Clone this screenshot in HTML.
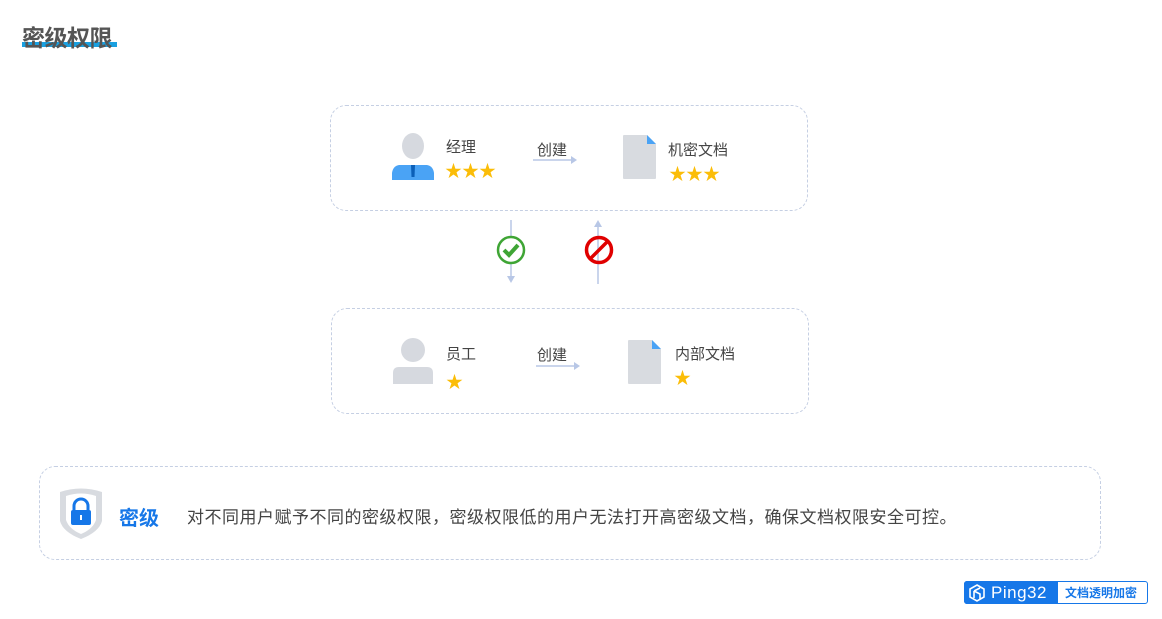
<!DOCTYPE html>
<html><head><meta charset="utf-8"><style>
body{margin:0;width:1162px;height:619px;background:#fff;position:relative;overflow:hidden;font-family:"Liberation Sans","Noto Sans CJK SC",sans-serif;color:#444}
.a{position:absolute}
.box{position:absolute;border:1px dashed #c5cfe3;border-radius:16px}
.t{font-size:15px;color:#444;white-space:nowrap}
.star{color:#fbbd08;font-size:17px;letter-spacing:0px;white-space:nowrap}
</style></head><body>
<div class="a" style="left:22px;top:42px;width:95px;height:5px;background:#1aa0e0"></div>
<div class="a" style="left:22px;top:19px;font-size:23px;font-weight:bold;color:#555;letter-spacing:-0.5px">密级权限</div>

<div class="box" style="left:330px;top:105px;width:476px;height:104px"></div>
<div class="box" style="left:331px;top:308px;width:476px;height:104px"></div>
<div class="box" style="left:39px;top:466px;width:1060px;height:92px"></div>

<svg class="a" style="left:391px;top:133px" width="44" height="48"><ellipse cx="22" cy="13" rx="11" ry="13" fill="#d6d9df"/><path d="M8 32 L36 32 Q42 33 43 40 L43 47 L1 47 L1 40 Q2 33 8 32Z" fill="#4aa3f5"/><path d="M20 32 L24 32 L23.5 44 L20.5 44Z" fill="#0b5fb8"/></svg>
<div class="a t" style="left:446px;top:136px">经理</div>
<div class="a star" style="left:445px;top:157px">★★★</div>
<div class="a t" style="left:537px;top:139px">创建</div>
<svg class="a" style="left:533px;top:155px" width="46" height="10"><line x1="0" y1="5" x2="40" y2="5" stroke="#b8c7e6" stroke-width="1.5"/><path d="M38 1 L44 5 L38 9Z" fill="#b8c7e6"/></svg>
<svg class="a" style="left:622px;top:135px" width="35" height="45"><path d="M2 0 H25 L34 9 V43 Q34 44 33 44 H2 Q1 44 1 43 V1 Q1 0 2 0Z" fill="#d8dbe0"/><path d="M25 0 L34 9 H25Z" fill="#4aa3f5"/></svg>
<div class="a t" style="left:668px;top:139px">机密文档</div>
<div class="a star" style="left:669px;top:160px">★★★</div>

<svg class="a" style="left:494px;top:218px" width="130" height="68">
<line x1="17" y1="2" x2="17" y2="62" stroke="#b8c7e6" stroke-width="1.5"/><path d="M13 58 L17 65 L21 58Z" fill="#b8c7e6"/>
<circle cx="17" cy="32" r="13" fill="#fff" stroke="#3fa535" stroke-width="2.5"/><path d="M10 32 L15 37 L24 27" fill="none" stroke="#3fa535" stroke-width="4"/>
<line x1="104" y1="6" x2="104" y2="66" stroke="#b8c7e6" stroke-width="1.5"/><path d="M100 9 L104 2 L108 9Z" fill="#b8c7e6"/>
<circle cx="105" cy="32" r="12.5" fill="none" stroke="#e00000" stroke-width="3.5"/><line x1="96" y1="41" x2="114" y2="23" stroke="#e00000" stroke-width="3.5"/>
</svg>

<svg class="a" style="left:391px;top:337px" width="44" height="48"><circle cx="22" cy="13" r="12" fill="#d6d9df"/><path d="M8 30 H36 Q42 30 42 36 V47 H2 V36 Q2 30 8 30Z" fill="#d6d9df"/></svg>
<div class="a t" style="left:446px;top:343px">员工</div>
<div class="a star" style="left:446px;top:368px">★</div>
<div class="a t" style="left:537px;top:344px">创建</div>
<svg class="a" style="left:536px;top:361px" width="46" height="10"><line x1="0" y1="5" x2="40" y2="5" stroke="#b8c7e6" stroke-width="1.5"/><path d="M38 1 L44 5 L38 9Z" fill="#b8c7e6"/></svg>
<svg class="a" style="left:627px;top:340px" width="35" height="45"><path d="M2 0 H25 L34 9 V43 Q34 44 33 44 H2 Q1 44 1 43 V1 Q1 0 2 0Z" fill="#d8dbe0"/><path d="M25 0 L34 9 H25Z" fill="#4aa3f5"/></svg>
<div class="a t" style="left:675px;top:343px">内部文档</div>
<div class="a star" style="left:674px;top:364px">★</div>

<svg class="a" style="left:57px;top:487px" width="48" height="54"><path d="M3 5 Q24 -2 45 5 V34 Q42 45 24 52 Q6 45 3 34Z" fill="#d8dbe0"/><path d="M9 9 Q24 4 39 9 V33 Q36 42 24 47 Q12 42 9 33Z" fill="#fff"/><path d="M17 23 V19 A7 7 0 0 1 31 19 V23" fill="none" stroke="#1677e8" stroke-width="3"/><rect x="14" y="23" width="20" height="15" rx="2" fill="#1677e8"/><rect x="23" y="28" width="2" height="5" fill="#fff"/></svg>
<div class="a" style="left:119px;top:502px;font-size:20px;font-weight:bold;color:#1677e8">密级</div>
<div class="a" style="left:187px;top:503px;font-size:17px;letter-spacing:0.5px;color:#444;white-space:nowrap">对不同用户赋予不同的密级权限，密级权限低的用户无法打开高密级文档，确保文档权限安全可控。</div>

<div class="a" style="left:964px;top:581px;width:182px;height:21px;border:1px solid #1677e8;border-radius:3px;background:#fff"></div>
<div class="a" style="left:964px;top:581px;width:94px;height:23px;background:#1677e8;border-radius:3px 0 0 3px"></div>
<svg class="a" style="left:968px;top:584px" width="18" height="18"><path d="M9 1 L16 5 V13 L9 17 L2 13 V5Z M6 7 L12 4 M6 7 V14 M6 7 L12 10 V15" fill="none" stroke="#fff" stroke-width="1.6"/></svg>
<div class="a" style="left:991px;top:582px;font-size:17px;line-height:21px;color:#fff;letter-spacing:0.5px">Ping32</div>
<div class="a" style="left:1065px;top:584px;font-size:12px;font-weight:bold;color:#1677e8">文档透明加密</div>
</body></html>
